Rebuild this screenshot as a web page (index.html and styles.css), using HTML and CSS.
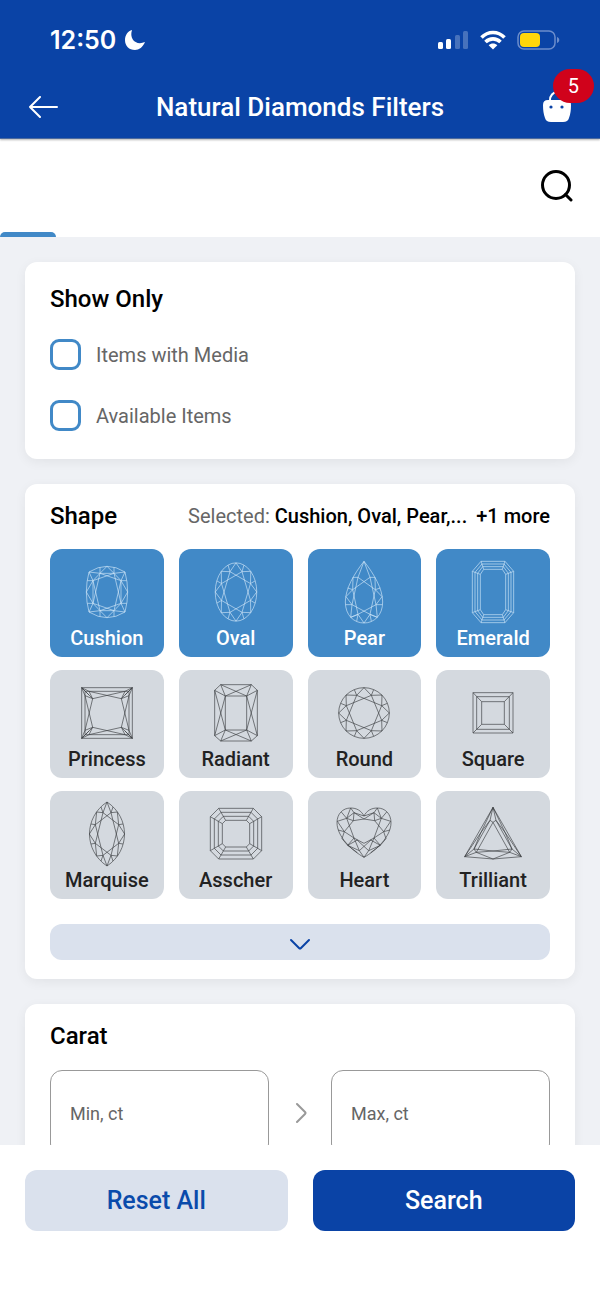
FILE: index.html
```html
<!DOCTYPE html>
<html lang="en">
<head>
  <meta charset="UTF-8" />
  <meta name="viewport" content="width=device-width, initial-scale=1.0"/>
  <title>Natural Diamonds Filters</title>
  <link rel="stylesheet" href="styles.css">
</head>
<body>

  <header class="header">
    <div class="status">
      <span class="time">12:50</span>
      <svg class="moon" width="22" height="22" viewBox="0 0 22 22"><path d="M8 1C5 10 12 17 21 13C19 18 15 21 11 21C5 21 1 17 1 11C1 6 4 2 8 1Z" fill="#fff"/></svg>
      <div class="status-icons">
        <svg width="31" height="20" viewBox="0 0 31 20" fill="#fff">
          <rect x="0" y="12" width="5" height="7" rx="1.5"/>
          <rect x="8" y="9" width="5" height="10" rx="1.5"/>
          <rect x="17" y="5" width="5" height="14" rx="1.5" opacity=".25"/>
          <rect x="25" y="1" width="5" height="18" rx="1.5" opacity=".25"/>
        </svg>
        <svg width="26" height="20" viewBox="0 0 26 20" fill="none" stroke="#fff" stroke-width="3.6">
          <path d="M1.500 7.500C8 .8 18 .8 24.500 7.500"/>
          <path d="M5.500 12C9.800 7.800 16.200 7.800 20.500 12"/>
          <path d="M8.700 15.200C11 12.800 15 12.800 17.300 15.200L13 19.500Z" fill="#fff" stroke="none"/>
        </svg>
        <svg width="43" height="20" viewBox="0 0 43 20">
          <rect x="1" y="1" width="37" height="18" rx="6" fill="none" stroke="#6c8dcc" stroke-width="1.500"/>
          <rect x="3" y="3" width="20" height="14" rx="4" fill="#ffd60a"/>
          <path d="M40 7C43 8 43 12 40 13Z" fill="#6c8dcc"/>
        </svg>
      </div>
    </div>
    <div class="appbar">
      <button class="icon-btn" type="button" aria-label="Back">
        <svg width="30" height="22" viewBox="0 0 30 22" fill="none" stroke="#fff" stroke-width="2" stroke-linecap="round" stroke-linejoin="round"><path d="M29 11H2M12 1L2 11L12 21"/></svg>
      </button>
      <h1>Natural Diamonds Filters</h1>
      <button class="icon-btn bag" type="button" aria-label="Cart">
        <svg width="30" height="32" viewBox="0 0 30 32">
          <path d="M8 11V9C8 5 11 1 15 1C19 1 22 5 22 9V11" fill="none" stroke="#fff" stroke-width="2"/>
          <path d="M6 9H25Q29 9 29 14Q29 22 27 27Q26 31 21 31H9Q4 31 3 27Q1 22 1 14Q1 9 6 9Z" fill="#fff"/>
          <circle cx="9" cy="16" r="1.600" fill="#0a43a6"/>
          <circle cx="20" cy="16" r="1.600" fill="#0a43a6"/>
        </svg>
        <span class="badge">5</span>
      </button>
    </div>
  </header>

  <nav class="tabs">
    <span class="tab-line"></span>
    <button class="icon-btn" type="button" aria-label="Search filters">
      <svg width="32" height="32" viewBox="0 0 32 32" fill="none" stroke="#000" stroke-width="3"><circle cx="15" cy="15" r="13.500"/><path d="M24.500 24.500L30 30" stroke-linecap="round"/></svg>
    </button>
  </nav>

  <main class="content">
    <section class="card show-only">
      <h2>Show Only</h2>
      <label class="check"><input type="checkbox"> Items with Media</label>
      <label class="check"><input type="checkbox"> Available Items</label>
    </section>

    <section class="card">
      <div class="card-head">
        <h2>Shape</h2>
        <p class="selected">Selected: <b>Cushion, Oval, Pear,...</b> <b class="more">+1 more</b></p>
      </div>

      <div class="shapes">
        <button class="shape active" type="button" aria-pressed="true">
          <svg viewBox="-120 -102 240 204">
            <path d="M-54-60Q0-94 54-60Q70 0 54 60Q0 94-54 60Q-70 0-54-60Z"/>
            <g id="cushion-half">
              <path d="M0-77L-21-56L-54-60L-42-34L-62 0L-42 34L-54 60L-21 56L0 77"/>
              <path d="M-21-56L42-34M-21 56L42 34M-42-34L-21 56M-42 34L-21-56"/>
              <path d="M-21-56L-42-34V34L-21 56M-21-56H0M-21 56H0M-42-34H-59M-42 34H-59M-21-56V-74M-21 56V74"/>
            </g>
            <use href="#cushion-half" transform="scale(-1 1)"/>
          </svg>
          Cushion
        </button>
        <button class="shape active" type="button" aria-pressed="true">
          <svg viewBox="-120 -102 240 204"><use href="#brilliant" transform="scale(.82 1.150)"/></svg>
          Oval
        </button>
        <button class="shape active" type="button" aria-pressed="true">
          <svg viewBox="-120 -102 240 204">
            <g id="pear-half">
              <path d="M0-92C-30-54-56-10-56 30C-56 70-30 93 0 93"/>
              <path d="M0-92L-18-44L-33-44L-34-7L-54 14L-36 38L-40 76L-18 67L0 93"/>
              <path d="M-18-44L34-7M-18-44L-36 38M-34-7L-18 67M-36 38L18 67M-34-7L-49-12M-36 38H-55M-18 67L-22 88M-18 67L-40 76"/>
            </g>
            <use href="#pear-half" transform="scale(-1 1)"/>
          </svg>
          Pear
        </button>
        <button class="shape active" type="button" aria-pressed="true">
          <svg viewBox="-120 -102 240 204">
            <path d="M-36-92H36L62-62V62L36 92H-36L-62 62V-62Z"/>
            <path d="M-33-84H33L54-59V59L33 84H-33L-54 59V-59Z"/>
            <path d="M-31-76H31L46-56V56L31 76H-31L-46 56V-56Z"/>
            <path d="M-28-68H28L38-53V53L28 68H-28L-38 53V-53Z"/>
            <path d="M-36-92L-28-68M-62-62L-38-53M36-92L28-68M62-62L38-53M-36 92L-28 68M-62 62L-38 53M36 92L28 68M62 62L38 53"/>
          </svg>
          Emerald
        </button>

        <button class="shape" type="button" aria-pressed="false">
          <svg viewBox="-120 -102 240 204">
            <path d="M-76-76H76V76H-76ZM-66-65H66V65H-66Z"/>
            <g id="princess-half">
              <path d="M-76-76L-43-43L54-65M-76 76L-43 43L54 65M-66-52L-43 43M-66 52L-43-43"/>
              <path d="M-76-76L-54-54M-76 76L-54 54M-76-76L-54-65M-76-76L-66-52M-76 76L-54 65M-76 76L-66 52"/>
              <path d="M-54-65L-43-43L-66-52M-54 65L-43 43L-66 52"/>
            </g>
            <use href="#princess-half" transform="scale(-1 1)"/>
          </svg>
          Princess
        </button>
        <button class="shape" type="button" aria-pressed="false">
          <svg viewBox="-120 -102 240 204">
            <path d="M-46-85H46L64-68V68L46 84H-46L-64 68V-68ZM-32-51H32V51H-32Z"/>
            <g id="radiant-half">
              <path d="M-46-85L32-51M-46 84L32 51M-64-68L-32 51M-64 68L-32-51"/>
              <path d="M-46-85L-32-51L-64-68M-46 84L-32 51L-64 68"/>
            </g>
            <use href="#radiant-half" transform="scale(-1 1)"/>
          </svg>
          Radiant
        </button>
        <button class="shape" type="button" aria-pressed="false">
          <svg viewBox="-120 -102 240 204">
            <g id="brilliant">
              <circle r="76"/>
              <path d="M0-76L22-53L54-54L53-22L76 0L53 22L54 54L22 53L0 76L-22 53L-54 54L-53 22L-76 0L-53-22L-54-54L-22-53Z"/>
              <path d="M22-53L53 22L-22 53L-53-22ZM-22-53L53-22L22 53L-53 22Z"/>
              <path d="M22-53L29-70M53-22L70-29M53 22L70 29M22 53L29 70M-22 53L-29 70M-53 22L-70 29M-53-22L-70-29M-22-53L-29-70"/>
            </g>
          </svg>
          Round
        </button>
        <button class="shape" type="button" aria-pressed="false">
          <svg viewBox="-120 -102 240 204">
            <path d="M-60-61H60V60H-60ZM-49-49H49V49H-49ZM-34-34H34V34H-34Z"/>
            <path d="M-60-61L-34-34M60-61L34-34M-60 60L-34 34M60 60L34 34"/>
          </svg>
          Square
        </button>

        <button class="shape" type="button" aria-pressed="false">
          <svg viewBox="-120 -102 240 204">
            <g id="marquise-half">
              <path d="M0-96C-70-50-70 50 0 96"/>
              <path d="M0-96L-12-64L-31-66L-35-28L-53 0L-35 28L-31 66L-12 64L0 96"/>
              <path d="M-12-64L35-28M-12-64L-35 28M-35-28L-12 64M-12 64L35 28M-35-28L-48-30M-35 28L-48 30M-12-64L-18-81M-12 64L-18 81"/>
            </g>
            <use href="#marquise-half" transform="scale(-1 1)"/>
          </svg>
          Marquise
        </button>
        <button class="shape" type="button" aria-pressed="false">
          <svg viewBox="-120 -102 240 204">
            <path d="M-52-77H52L77-52V50L52 75H-52L-77 50V-52Z"/>
            <path d="M-45-65H45L65-45V43L45 63H-45L-65 43V-45Z"/>
            <path d="M-38-53H38L53-38V36L38 51H-38L-53 36V-38Z"/>
            <path d="M-31-41H31L41-31V29L31 39H-31L-41 29V-31Z"/>
            <path d="M-52-77L-31-41M-77-52L-41-31M52-77L31-41M77-52L41-31M-52 75L-31 39M-77 50L-41 29M52 75L31 39M77 50L41 29"/>
          </svg>
          Asscher
        </button>
        <button class="shape" type="button" aria-pressed="false">
          <svg viewBox="-120 -102 240 204">
            <g id="heart-half">
              <path d="M0-54C-8-70-22-78-40-78C-64-78-81-60-81-34C-81 8-36 50 0 70"/>
              <path d="M0-54L-30-64L-40-78L-52-47L-80-38L-59-7L-66 14L-49 34L-14 50L0 70"/>
              <path d="M0-45L-32-40L-52-47M-30-64L0-45M-30-64L-32-40L-59-7M-30-64L-52-47L-68-66M-52-47L-30 12L-49 34M-59-7L-30 12L0 28M-59-7L-78-12"/>
              <path d="M-30 12L-14 50L22 17M-49 34L-20 56M-49 34L-20 18"/>
            </g>
            <use href="#heart-half" transform="scale(-1 1)"/>
          </svg>
          Heart
        </button>
        <button class="shape" type="button" aria-pressed="false">
          <svg viewBox="-120 -102 240 204">
            <g id="trilliant-half">
              <path d="M0-80L-85 68L0 75"/>
              <path d="M0-80L-9-41L-36-5L-57 45L-85 68L-36-5L0-80"/>
              <path d="M-9-41L-57 45L0 51L-50 55L-85 68M0-35L-50 55L0 75M-9-41L0-35M-57 45L-50 55"/>
            </g>
            <use href="#trilliant-half" transform="scale(-1 1)"/>
          </svg>
          Trilliant
        </button>
      </div>

      <button class="expand" type="button" aria-label="Show all shapes">
        <svg width="22" height="14" viewBox="0 0 22 14" fill="none" stroke="#0a43a6" stroke-width="2" stroke-linecap="round" stroke-linejoin="round"><path d="M2 2L10 10Q11 11 12 10L20 2"/></svg>
      </button>
    </section>

    <section class="card">
      <h2>Carat</h2>
      <div class="range">
        <input type="text" placeholder="Min, ct" aria-label="Minimum carat">
        <svg width="14" height="24" viewBox="0 0 14 24" fill="none" stroke="#999" stroke-width="2" stroke-linecap="round" stroke-linejoin="round"><path d="M4 3L12 11Q13 12 12 13L4 21"/></svg>
        <input type="text" placeholder="Max, ct" aria-label="Maximum carat">
      </div>
    </section>
  </main>

  <footer class="actions">
    <button class="reset" type="button">Reset All</button>
    <button class="search" type="button">Search</button>
  </footer>

</body>
</html>
```
FILE: styles.css
```css
* {
  margin: 0;
  padding: 0;
  box-sizing: border-box;
}

body {
  font-family: Roboto, sans-serif;
  background: #eff1f5;
  color: #000;
  display: flex;
  flex-direction: column;
  height: 100vh;
  overflow: hidden;
  font-size: 20px;
}

button {
  border: none;
  font-family: inherit;
  cursor: pointer;
}

.header {
  background: #0a43a6;
  color: #fff;
  border-bottom: 1px solid #4c6a9e;
  box-shadow: 0 1px 2px rgba(0,0,0,0.3);
  position: relative;
}

.status {
  display: flex;
  align-items: center;
  height: 76px;
  padding: 4px 40px 0 50px;
}

.time {
  font-family: Inter, sans-serif;
  font-size: 25px;
  font-weight: 600;
}

.moon {
  margin-left: 8px;
}

.status-icons {
  display: flex;
  gap: 11px;
  margin-left: auto;
}

.appbar {
  display: flex;
  align-items: center;
  justify-content: space-between;
  height: 62px;
  padding: 0 28px;
}

.icon-btn {
  display: flex;
  background: none;
}

h1 {
  font-size: 26px;
  font-weight: 500;
}

.bag {
  position: relative;
}

.badge {
  position: absolute;
  left: 11px;
  bottom: 20px;
  width: 41px;
  height: 34px;
  border-radius: 17px;
  background: #d0021b;
  color: #fff;
  font-size: 20px;
  line-height: 34px;
}

.tabs {
  display: flex;
  align-items: center;
  justify-content: space-between;
  height: 98px;
  padding-right: 27px;
  background: #fff;
}

.tabs .icon-btn {
  padding-bottom: 4px;
}

.tab-line {
  align-self: flex-end;
  width: 56px;
  height: 5px;
  border-radius: 5px 5px 0 0;
  background: #4189c7;
}

.content {
  display: flex;
  flex-direction: column;
  gap: 25px;
  flex: 1;
  min-height: 0;
  padding: 25px 25px 0;
  overflow: hidden;
}

.card {
  flex-shrink: 0;
  background: #fff;
  border-radius: 12px;
  padding: 17px 25px 19px;
  box-shadow: 0 3px 12px rgba(0,0,0,0.06);
}

h2 {
  font-size: 24px;
  font-weight: 500;
  line-height: 30px;
}

.show-only {
  display: flex;
  flex-direction: column;
  gap: 30px;
  padding: 22px 25px 28px;
}

.show-only h2 {
  margin-bottom: -5px;
}

.check {
  display: flex;
  align-items: center;
  gap: 15px;
  color: #666;
}

.check input {
  appearance: none;
  width: 31px;
  height: 31px;
  border: 3px solid #4189c7;
  border-radius: 9px;
}

.check input:checked {
  background: #4189c7;
}

.card-head {
  display: flex;
  align-items: center;
  justify-content: space-between;
}

.selected {
  color: #666;
}

.selected b {
  color: #000;
  font-weight: 500;
}

.selected .more {
  margin-left: 4px;
}

.shapes {
  display: grid;
  grid-template-columns: repeat(4, 1fr);
  gap: 13px 15px;
  margin-top: 18px;
}

.shape {
  display: flex;
  flex-direction: column;
  align-items: center;
  height: 108px;
  padding-top: 9px;
  border-radius: 12px;
  background: #d4d9df;
  color: #222;
  font-size: 20px;
  font-weight: 500;
  line-height: 24px;
}

.shape.active {
  background: #4189c7;
  color: #fff;
}

.shape svg {
  width: 80px;
  height: 68px;
  fill: none;
  stroke: #3c3f43;
  stroke-width: 2;
  stroke-linejoin: round;
}

.shape.active svg {
  stroke: #cfe5f8;
}

.expand {
  display: flex;
  align-items: center;
  justify-content: center;
  width: 100%;
  height: 36px;
  margin-top: 25px;
  padding-top: 6px;
  border-radius: 12px;
  background: #dae1ed;
}

.range {
  display: flex;
  align-items: center;
  gap: 24px;
  margin-top: 19px;
}

.range input {
  flex: 1;
  min-width: 0;
  height: 86px;
  padding: 0 19px;
  border: 1px solid #999;
  border-radius: 12px;
  font-family: inherit;
  font-size: 18px;
}

.range input::placeholder {
  color: #666;
}

.actions {
  display: flex;
  gap: 25px;
  padding: 25px 25px 68px;
  background: #fff;
}

.actions button {
  flex: 1;
  height: 61px;
  border-radius: 12px;
  font-size: 25px;
  font-weight: 500;
}

.reset {
  background: #dae1ed;
  color: #0a4bab;
}

.search {
  background: #0a43a6;
  color: #fff;
}
```
